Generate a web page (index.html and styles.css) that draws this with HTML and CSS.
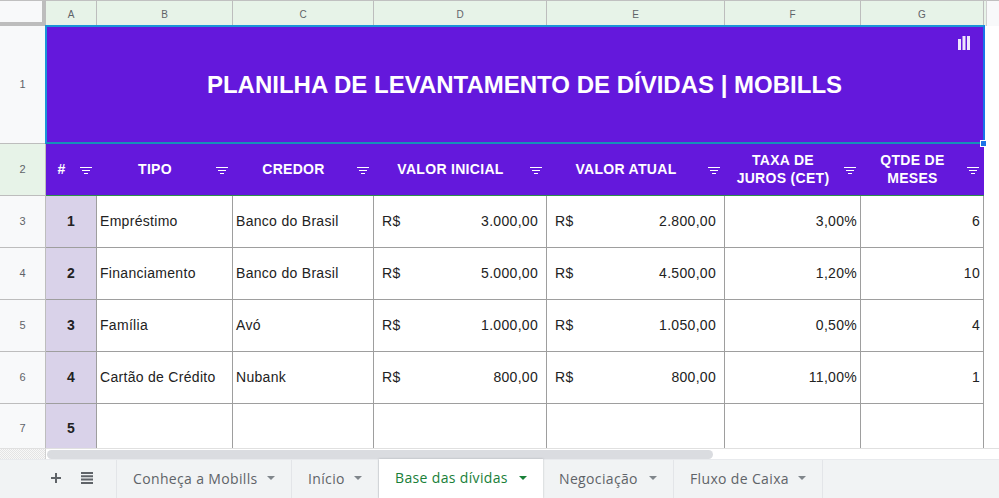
FILE: index.html
```html
<!DOCTYPE html>
<html lang="en">
<head>
    <meta charset="UTF-8">
    <meta name="viewport" content="width=device-width, initial-scale=1.0">
    <title>Base das dívidas</title>
    <link rel="stylesheet" href="styles.css">
</head>
<body>
    <div class="sheet">
        <!-- Column letters -->
        <div class="corner"></div>
        <div class="col-head">A</div>
        <div class="col-head">B</div>
        <div class="col-head">C</div>
        <div class="col-head">D</div>
        <div class="col-head">E</div>
        <div class="col-head">F</div>
        <div class="col-head">G</div>
        <div class="col-stub"></div>
        <div class="col-rest"></div>

        <!-- Row 1 -->
        <div class="row-head">1</div>
        <div class="title">
            PLANILHA DE LEVANTAMENTO DE DÍVIDAS | MOBILLS
            <svg class="chart-icon" width="12" height="14" viewBox="0 0 12 14">
                <rect x="0" y="3" width="3" height="11" fill="#efe6fc"/>
                <rect x="4.5" y="0" width="3" height="14" fill="#efe6fc"/>
                <rect x="9" y="0" width="3" height="14" fill="#efe6fc"/>
            </svg>
            <span class="fill-handle"></span>
        </div>
        <div class="blank"></div>

        <!-- Row 2 -->
        <div class="row-head selected">2</div>
        <div class="th"><span>#</span><i class="filter"></i></div>
        <div class="th"><span>TIPO</span><i class="filter"></i></div>
        <div class="th"><span>CREDOR</span><i class="filter"></i></div>
        <div class="th"><span>VALOR INICIAL</span><i class="filter"></i></div>
        <div class="th"><span>VALOR ATUAL</span><i class="filter"></i></div>
        <div class="th"><span>TAXA DE<br>JUROS (CET)</span><i class="filter"></i></div>
        <div class="th"><span>QTDE DE<br>MESES</span><i class="filter"></i></div>
        <div class="blank"></div>

        <!-- Row 3 -->
        <div class="row-head">3</div>
        <div class="td num">1</div>
        <div class="td">Empréstimo</div>
        <div class="td">Banco do Brasil</div>
        <div class="td money"><span>R$</span><span>3.000,00</span></div>
        <div class="td money"><span>R$</span><span>2.800,00</span></div>
        <div class="td right">3,00%</div>
        <div class="td right">6</div>
        <div class="blank"></div>

        <!-- Row 4 -->
        <div class="row-head">4</div>
        <div class="td num">2</div>
        <div class="td">Financiamento</div>
        <div class="td">Banco do Brasil</div>
        <div class="td money"><span>R$</span><span>5.000,00</span></div>
        <div class="td money"><span>R$</span><span>4.500,00</span></div>
        <div class="td right">1,20%</div>
        <div class="td right">10</div>
        <div class="blank"></div>

        <!-- Row 5 -->
        <div class="row-head">5</div>
        <div class="td num">3</div>
        <div class="td">Família</div>
        <div class="td">Avó</div>
        <div class="td money"><span>R$</span><span>1.000,00</span></div>
        <div class="td money"><span>R$</span><span>1.050,00</span></div>
        <div class="td right">0,50%</div>
        <div class="td right">4</div>
        <div class="blank"></div>

        <!-- Row 6 -->
        <div class="row-head">6</div>
        <div class="td num">4</div>
        <div class="td">Cartão de Crédito</div>
        <div class="td">Nubank</div>
        <div class="td money"><span>R$</span><span>800,00</span></div>
        <div class="td money"><span>R$</span><span>800,00</span></div>
        <div class="td right">11,00%</div>
        <div class="td right">1</div>
        <div class="blank"></div>

        <!-- Row 7 -->
        <div class="row-head last">7</div>
        <div class="td num last">5</div>
        <div class="td last"></div>
        <div class="td last"></div>
        <div class="td last"></div>
        <div class="td last"></div>
        <div class="td last"></div>
        <div class="td last"></div>
        <div class="blank"></div>
    </div>

    <div class="scroll-row">
        <div class="scroll-corner"></div>
        <div class="scroll-track"><div class="scroll-thumb"></div></div>
    </div>

    <div class="tabbar">
        <div class="tab-tools">
            <svg width="12" height="12" viewBox="0 0 12 12">
                <path d="M5 1h2v4h4v2H7v4H5V7H1V5h4z" fill="#5f6368"/>
            </svg>
            <svg width="14" height="12" viewBox="0 0 14 12">
                <path d="M1 0h12v2H1zM1 3.3h12v2H1zM1 6.6h12v2H1zM1 9.9h12v2H1z" fill="#5f6368"/>
            </svg>
        </div>
        <div class="tab tab-1">Conheça a Mobills<i class="caret"></i></div>
        <div class="tab tab-2">Início<i class="caret"></i></div>
        <div class="tab tab-3 active">Base das dívidas<i class="caret"></i></div>
        <div class="tab tab-4">Negociação<i class="caret"></i></div>
        <div class="tab tab-5">Fluxo de Caixa<i class="caret"></i></div>
    </div>
</body>
</html>
```

FILE: styles.css
```css
html, body {
    margin: 0;
    height: 498px;
    overflow: hidden;
    background: #ffffff;
    font-family: 'Liberation Sans', Arial, sans-serif;
}

.sheet {
    display: grid;
    grid-template-columns: 46px 51px 136px 141px 173px 178px 136px 123px 3px 12px;
    grid-template-rows: 26px 118px 52px 52px 52px 52px 52px 44px;
    height: 448px;
}

.sheet > div {
    box-sizing: border-box;
}

.corner {
    background: #f8f9fa;
    border-top: 1px solid #c0c0c0;
    border-right: 4px solid #bdbdbd;
    border-bottom: 4px solid #bdbdbd;
}

.col-head {
    display: flex;
    align-items: center;
    justify-content: center;
    padding-top: 1px;
    background: #e7f3e8;
    border-top: 1px solid #c0c0c0;
    border-right: 1px solid #bdbdbd;
    font-size: 10px;
    color: #5f6368;
}

.col-stub {
    background: #e7f3e8;
    border-top: 1px solid #c0c0c0;
    border-right: 1px solid #d0d0d0;
}

.col-rest {
    background: #f8f9fa;
    border-top: 1px solid #c0c0c0;
}

.row-head {
    display: flex;
    align-items: center;
    justify-content: center;
    padding-bottom: 1px;
    background: #f8f9fa;
    border-right: 1px solid #bdbdbd;
    border-bottom: 1px solid #bdbdbd;
    font-size: 11px;
    color: #5f6368;
}

.row-head.selected {
    background: #e7f3e8;
}

.title {
    grid-column: 2 / span 7;
    position: relative;
    display: flex;
    align-items: center;
    justify-content: center;
    padding-left: 19px;
    background: #6418dc;
    font-size: 24px;
    font-weight: bold;
    color: #ffffff;
}

/* selection outline sits half over the neighbouring cells */
.title::before {
    content: "";
    position: absolute;
    top: -1px;
    left: -1px;
    right: -1px;
    bottom: 0;
    border: 2px solid #1a73e8;
    border-color: #1b94d8 #1a73e8 #1690b8 #1b94d8;
}

.chart-icon {
    position: absolute;
    top: 10px;
    right: 14px;
}

.fill-handle {
    position: absolute;
    right: -3px;
    bottom: -3px;
    width: 7px;
    height: 7px;
    background: #1a73e8;
    border: 1px solid #ffffff;
    box-sizing: border-box;
}

.blank {
    grid-column: span 2;
    background: #ffffff;
}

.th {
    display: flex;
    align-items: center;
    padding: 0 5px 2px 0;
    background: #6418dc;
    border-bottom: 1px solid #2f8f4e;
    font-size: 14px;
    font-weight: bold;
    line-height: 18px;
    letter-spacing: 0.3px;
    text-align: center;
    color: #ffffff;
}

.th span {
    flex: 1;
}

.filter {
    flex: none;
    width: 12px;
    height: 7px;
    margin-left: 3px;
    margin-top: 4px;
    background:
        linear-gradient(#ffffff, #ffffff) center 0 / 12px 1px no-repeat,
        linear-gradient(#ffffff, #ffffff) center 3px / 8px 1px no-repeat,
        linear-gradient(#ffffff, #ffffff) center 6px / 4px 1px no-repeat;
}

.td {
    display: flex;
    align-items: center;
    padding: 0 3px 2px;
    background: #ffffff;
    border-right: 1px solid #9e9e9e;
    border-bottom: 1px solid #9e9e9e;
    font-size: 14px;
    letter-spacing: 0.3px;
    color: #222222;
    white-space: nowrap;
}

.td.last {
    border-bottom: 0;
    padding: 3px 3px 0;
}

.row-head.last {
    border-bottom: 0;
    padding: 4px 0 0;
}

.num {
    justify-content: center;
    background: #d9d2e9;
    font-weight: bold;
}

.right {
    justify-content: flex-end;
}

.money {
    justify-content: space-between;
    padding: 0 8px 2px;
}

.scroll-row {
    display: flex;
    height: 11px;
    box-sizing: border-box;
}

.scroll-corner {
    width: 46px;
    box-sizing: border-box;
    border-top: 1px solid #e0e0e0;
    border-right: 1px solid #d0d0d0;
    background: repeating-conic-gradient(#e4e4e4 0 25%, #f8f8f8 0 50%) 0 0 / 2px 2px;
}

.scroll-track {
    flex: 1;
    box-sizing: border-box;
    padding: 1px 0 0 1px;
    border-top: 1px solid #e0e0e0;
    background: #ffffff;
}

.scroll-thumb {
    width: 666px;
    height: 9px;
    border-radius: 5px;
    background: #dadce0;
}

.tabbar {
    display: flex;
    height: 39px;
    background: #f1f3f4;
    border-top: 1px solid #e8eaed;
    box-sizing: border-box;
    font-family: 'Open Sans', sans-serif;
    font-size: 14px;
    font-weight: 500;
    letter-spacing: 0.35px;
    color: #5f6368;
}

.tab-tools {
    display: flex;
    align-items: center;
    justify-content: space-between;
    box-sizing: border-box;
    width: 117px;
    padding: 0 22px 2px 50px;
    border-right: 1px solid #e3e5e8;
}

.tab {
    display: flex;
    align-items: center;
    justify-content: space-between;
    box-sizing: border-box;
    padding: 0 16px 2px;
    border-right: 1px solid #e3e5e8;
    white-space: nowrap;
}

.tab-1 { width: 175px; }
.tab-2 { width: 87px; }
.tab-3 { width: 164px; }
.tab-4 { width: 131px; }
.tab-5 { width: 149px; }

.tab.active {
    background: #ffffff;
    color: #188038;
    border-right: 0;
    margin-top: -1px;
    box-shadow: 0 0 2px rgba(60, 64, 67, 0.3);
}

.caret {
    flex: none;
    width: 0;
    height: 0;
    border-left: 4px solid transparent;
    border-right: 4px solid transparent;
    border-top: 4px solid #80868b;
}

.active .caret {
    border-top-color: #188038;
}
```
